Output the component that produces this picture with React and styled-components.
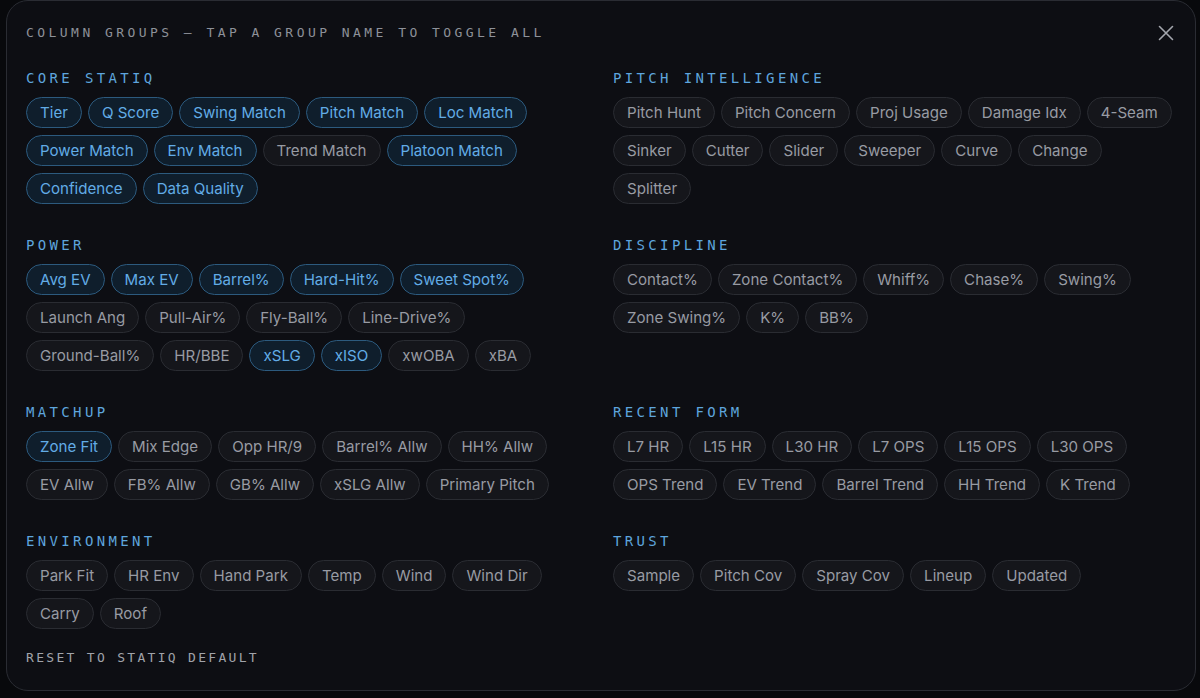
import React from 'react';
import styled, { createGlobalStyle } from 'styled-components';

const GlobalStyle = createGlobalStyle`
  html, body {
    margin: 0;
    padding: 0;
    background: #08090c;
  }
  * { box-sizing: border-box; }
`;

const Frame = styled.div`
  padding: 0 4px 0 6px;
`;

const Panel = styled.div`
  height: 691px;
  background: #0d0e13;
  border: 1px solid #2a2c33;
  border-radius: 22px;
  padding: 23px 19px 0;
  font-family: Inter, 'Noto Sans', sans-serif;
`;

const TopBar = styled.div`
  display: flex;
  align-items: center;
  justify-content: space-between;
  height: 17px;
`;

const Title = styled.div`
  font-family: 'DejaVu Sans Mono', 'Liberation Mono', monospace;
  font-size: 13px;
  letter-spacing: 3.45px;
  line-height: 17px;
  color: #8d9199;
`;

const CloseButton = styled.button`
  background: none;
  border: none;
  padding: 0;
  margin-right: 1px;
  width: 18px;
  height: 18px;
  display: flex;
  align-items: center;
  justify-content: center;
  color: #a3a6ad;
  cursor: pointer;
`;

const Groups = styled.div`
  display: grid;
  grid-template-columns: 1fr 1fr;
  column-gap: 24px;
  row-gap: 33px;
  margin-top: 29px;
`;

const Group = styled.section`
  display: flex;
  flex-direction: column;
  gap: 10px;
`;

const GroupName = styled.div`
  font-family: 'DejaVu Sans Mono', 'Liberation Mono', monospace;
  font-size: 14px;
  letter-spacing: 3.35px;
  line-height: 17px;
  color: #5ea5dd;
  cursor: pointer;
`;

const Chips = styled.div`
  display: flex;
  flex-wrap: wrap;
  gap: 7px 6px;
`;

const Chip = styled.span`
  display: inline-flex;
  align-items: center;
  height: 31px;
  padding: 0 13px;
  border-radius: 16px;
  font-size: 15.1px;
  line-height: 19px;
  white-space: nowrap;
  border: 1px solid ${p => (p.$on ? '#2c5a7e' : '#2a2c32')};
  background: ${p => (p.$on ? '#0f1e2c' : '#15161b')};
  color: ${p => (p.$on ? '#62ace6' : '#989ba3')};
`;

const Reset = styled.div`
  margin-top: 20px;
  font-family: 'DejaVu Sans Mono', 'Liberation Mono', monospace;
  font-size: 13px;
  letter-spacing: 2.3px;
  line-height: 17px;
  color: #a0a3aa;
  cursor: pointer;
`;

const groups = [
  {
    name: 'CORE STATIQ',
    chips: [
      ['Tier', 1], ['Q Score', 1], ['Swing Match', 1], ['Pitch Match', 1], ['Loc Match', 1],
      ['Power Match', 1], ['Env Match', 1], ['Trend Match', 0], ['Platoon Match', 1],
      ['Confidence', 1], ['Data Quality', 1],
    ],
  },
  {
    name: 'PITCH INTELLIGENCE',
    chips: [
      ['Pitch Hunt'], ['Pitch Concern'], ['Proj Usage'], ['Damage Idx'], ['4-Seam'],
      ['Sinker'], ['Cutter'], ['Slider'], ['Sweeper'], ['Curve'], ['Change'], ['Splitter'],
    ],
  },
  {
    name: 'POWER',
    chips: [
      ['Avg EV', 1], ['Max EV', 1], ['Barrel%', 1], ['Hard-Hit%', 1], ['Sweet Spot%', 1],
      ['Launch Ang'], ['Pull-Air%'], ['Fly-Ball%'], ['Line-Drive%'],
      ['Ground-Ball%'], ['HR/BBE'], ['xSLG', 1], ['xISO', 1], ['xwOBA'], ['xBA'],
    ],
  },
  {
    name: 'DISCIPLINE',
    chips: [
      ['Contact%'], ['Zone Contact%'], ['Whiff%'], ['Chase%'], ['Swing%'],
      ['Zone Swing%'], ['K%'], ['BB%'],
    ],
  },
  {
    name: 'MATCHUP',
    chips: [
      ['Zone Fit', 1], ['Mix Edge'], ['Opp HR/9'], ['Barrel% Allw'], ['HH% Allw'],
      ['EV Allw'], ['FB% Allw'], ['GB% Allw'], ['xSLG Allw'], ['Primary Pitch'],
    ],
  },
  {
    name: 'RECENT FORM',
    chips: [
      ['L7 HR'], ['L15 HR'], ['L30 HR'], ['L7 OPS'], ['L15 OPS'], ['L30 OPS'],
      ['OPS Trend'], ['EV Trend'], ['Barrel Trend'], ['HH Trend'], ['K Trend'],
    ],
  },
  {
    name: 'ENVIRONMENT',
    chips: [
      ['Park Fit'], ['HR Env'], ['Hand Park'], ['Temp'], ['Wind'], ['Wind Dir'],
      ['Carry'], ['Roof'],
    ],
  },
  {
    name: 'TRUST',
    chips: [['Sample'], ['Pitch Cov'], ['Spray Cov'], ['Lineup'], ['Updated']],
  },
];

export default function App() {
  return (
    <Frame>
      <GlobalStyle />
      <Panel>
        <TopBar>
          <Title>COLUMN GROUPS — TAP A GROUP NAME TO TOGGLE ALL</Title>
          <CloseButton aria-label="Close">
            <svg width="16" height="16" viewBox="0 0 16 16" fill="none">
              <path d="M1.5 1.5l13 13M14.5 1.5l-13 13" stroke="currentColor" strokeWidth="1.6" strokeLinecap="round" />
            </svg>
          </CloseButton>
        </TopBar>
        <Groups>
          {groups.map(g => (
            <Group key={g.name}>
              <GroupName>{g.name}</GroupName>
              <Chips>
                {g.chips.map(([label, on]) => (
                  <Chip key={label} $on={!!on}>{label}</Chip>
                ))}
              </Chips>
            </Group>
          ))}
        </Groups>
        <Reset>RESET TO STATIQ DEFAULT</Reset>
      </Panel>
    </Frame>
  );
}
